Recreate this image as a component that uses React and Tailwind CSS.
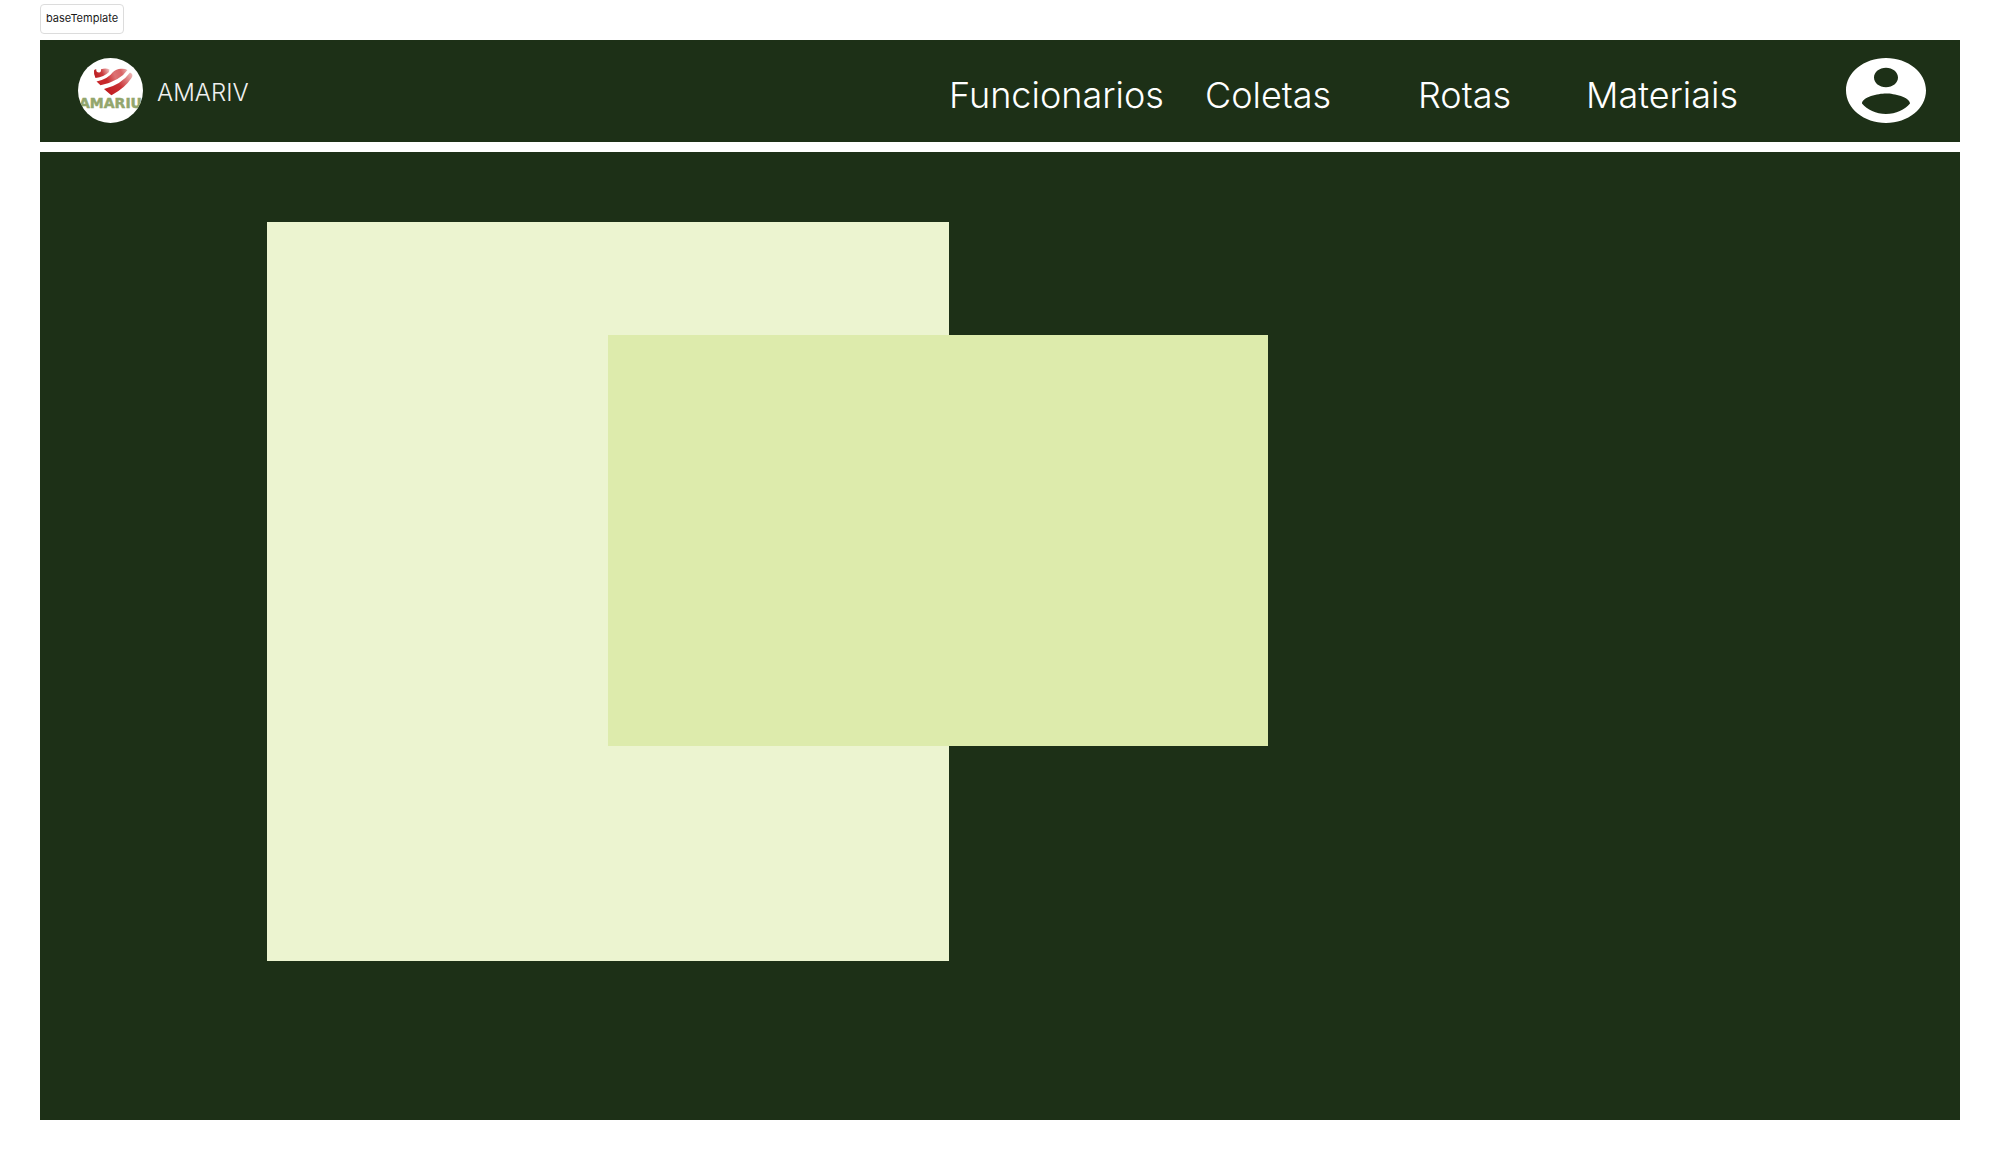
function AmarivLogo() {
  return (
    <svg viewBox="0 0 65 65" className="size-[65px]" role="img" aria-label="AMARIV">
      <defs>
        <clipPath id="badge">
          <circle cx="32.5" cy="32.5" r="32.5" />
        </clipPath>
        <linearGradient id="tip" gradientUnits="userSpaceOnUse" x1="28" y1="34" x2="54" y2="15">
          <stop offset="0" stopColor="#c01b1f" />
          <stop offset="0.45" stopColor="#c93034" />
          <stop offset="1" stopColor="#eebcbc" />
        </linearGradient>
        <linearGradient id="band" gradientUnits="userSpaceOnUse" x1="18" y1="24" x2="52" y2="12">
          <stop offset="0" stopColor="#c8282b" />
          <stop offset="0.3" stopColor="#c8282b" />
          <stop offset="0.55" stopColor="#dc7274" />
          <stop offset="0.75" stopColor="#d96466" />
          <stop offset="1" stopColor="#f1cccc" />
        </linearGradient>
        <linearGradient id="lobe" gradientUnits="userSpaceOnUse" x1="16" y1="18" x2="32" y2="11">
          <stop offset="0" stopColor="#b9191d" />
          <stop offset="0.5" stopColor="#cc3b3e" />
          <stop offset="1" stopColor="#f3d0d0" />
        </linearGradient>
      </defs>
      <g clipPath="url(#badge)">
        <rect width="65" height="65" fill="#fff" />
        <path d="M16 12.500Q17 11 18.300 11.300Q18 14.500 21 14.500Q23.500 14 23 11.200Q28 9.500 31.500 11.500L31 14Q26 19 17.500 20Q15.500 16 16 12.500Z" fill="url(#lobe)" />
        <path d="M18.500 23.500Q30 21 35 14Q38 11 43 10.800Q47 10.500 49.500 12Q42 23 22.500 27.300Z" fill="url(#band)" />
        <path d="M52 14.500Q56 16 53.500 20Q47 30 33.500 37.300Q31 35.500 26 31Q43 27 52 14.500Z" fill="url(#tip)" />
        <text x="1" y="50" fontSize="14" fontWeight="700" fill="#93a66d" stroke="#93a66d" strokeWidth="0.5" fontFamily="'DejaVu Sans', sans-serif">
          AMARIU
        </text>
      </g>
    </svg>
  );
}

function AccountIcon() {
  return (
    <svg viewBox="2 2 20 20" preserveAspectRatio="none" className="h-[65px] w-20 fill-white" aria-hidden="true">
      <path d="M12 2C6.480 2 2 6.480 2 12s4.480 10 10 10 10-4.480 10-10S17.520 2 12 2zm0 3c1.660 0 3 1.340 3 3s-1.340 3-3 3-3-1.340-3-3 1.340-3 3-3zm0 14.200c-2.500 0-4.710-1.280-6-3.220.03-1.990 4-3.080 6-3.080 1.990 0 5.970 1.090 6 3.080-1.290 1.940-3.500 3.220-6 3.220z" />
    </svg>
  );
}

export default function App() {
  return (
    <div className="min-h-screen bg-white px-10 pt-1 pb-10 font-['Inter',sans-serif]">
      <div className="mb-1.5 flex h-[30px] w-fit items-center rounded-sm border border-[#dcdcdc] px-[5px] pb-0.5 text-[11px] text-[#1a1a1a]">
        baseTemplate
      </div>

      <header className="mb-2.5 flex h-[102px] items-center bg-[#1d3017] pr-[34px] pb-0.5 pl-[38px] font-light text-white">
        <a href="#inicio" className="flex items-center gap-3.5">
          <AmarivLogo />
          <span className="pt-1.5 text-2xl text-[#f0f0f0]">AMARIV</span>
        </a>
        <nav className="mr-22 ml-auto flex pt-2.5 text-4xl">
          <a href="#funcionarios" className="w-64">Funcionarios</a>
          <a href="#coletas" className="w-[213px]">Coletas</a>
          <a href="#rotas" className="w-[168px]">Rotas</a>
          <a href="#materiais" className="w-[172px]">Materiais</a>
        </nav>
        <button type="button" aria-label="Conta">
          <AccountIcon />
        </button>
      </header>

      <main className="grid grid-cols-[227fr_341fr_341fr_319fr_692fr] grid-rows-[70px_113px_411px_215px_159px] bg-[#1d3017]">
        <section className="col-start-2 col-end-4 row-start-2 row-end-5 bg-[#ecf4d0]" />
        <section className="col-start-3 col-end-5 row-start-3 row-end-4 bg-[#ddebac]" />
      </main>
    </div>
  );
}
